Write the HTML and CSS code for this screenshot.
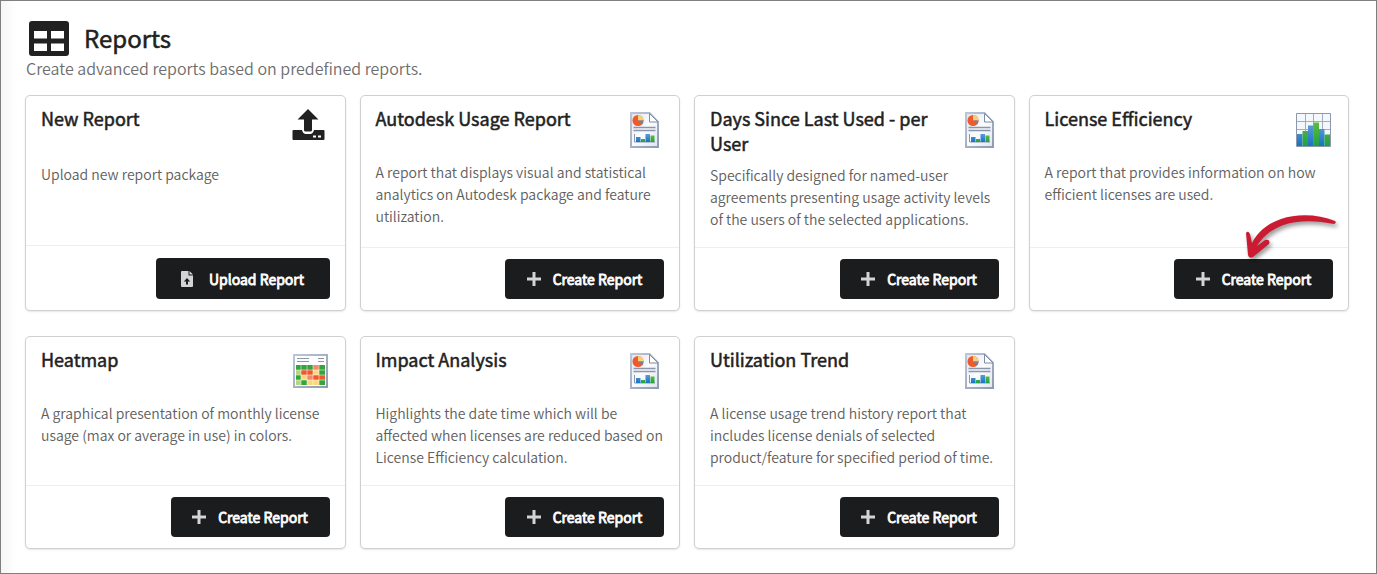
FILE: index.html
```html
<!DOCTYPE html>
<html lang="en">

<head>
    <meta charset="utf-8">
    <title>Reports</title>
    <link rel="stylesheet" href="styles.css">
</head>

<body>
    <!-- shared icons -->
    <svg class="sprite" aria-hidden="true">
        <defs>
            <linearGradient id="pageFill" x1="0" y1="0" x2="1" y2="1">
                <stop offset="0" stop-color="#dce4f0" />
                <stop offset="0.5" stop-color="#fbfcfe" />
                <stop offset="1" stop-color="#dfe5f0" />
            </linearGradient>
            <linearGradient id="frame" x1="0" y1="0" x2="1" y2="1">
                <stop offset="0" stop-color="#bcc6d6" />
                <stop offset="1" stop-color="#8f9bb1" />
            </linearGradient>
            <linearGradient id="blueBar" x1="0" y1="0" x2="0" y2="1">
                <stop offset="0" stop-color="#5a9bd8" />
                <stop offset="1" stop-color="#1873c2" />
            </linearGradient>
            <linearGradient id="greenBar" x1="0" y1="0" x2="0" y2="1">
                <stop offset="0" stop-color="#5cbc3c" />
                <stop offset="1" stop-color="#1fa048" />
            </linearGradient>
        </defs>
        <symbol id="plus" viewBox="0 0 14 14">
            <path d="M5.500 0h3v5.500H14v3H8.500V14h-3V8.500H0v-3h5.500z" />
        </symbol>
        <symbol id="report" viewBox="0 0 35 36">
            <path d="M4 1h18.500l8.500 9v25H4z" fill="url(#pageFill)" stroke="url(#frame)" stroke-width="2" />
            <path d="M22.500 1.500V10H31z" fill="#fff" stroke="#7f8ca3" />
            <circle cx="11" cy="8.500" r="5.500" fill="#f0592b" />
            <path d="M11 8.500V3a5.500 5.500 0 0 1 5.500 5.500z" fill="#f9cf73" />
            <path d="M11 8.500h5.500a5.500 5.500 0 0 1-1.500 4z" fill="#75829b" />
            <path d="M6.500 15.500h22M6.500 18.500h22" stroke="#8b95ab" stroke-width="1.300" />
            <path d="M7.500 22v8h20.500" fill="none" stroke="#8b95ab" />
            <path d="M9 25h4.500v5H9zM18.500 22H23v8h-4.500z" fill="url(#blueBar)" />
            <path d="M14 27h4v3h-4zM23.500 23.500h4V30h-4z" fill="url(#greenBar)" />
        </symbol>
    </svg>

    <div class="page">
        <header class="page-header">
            <h1>
                <svg class="page-icon" viewBox="0 0 40 35" aria-hidden="true">
                    <path fill-rule="evenodd" d="M3 0h34a3 3 0 0 1 3 3v29a3 3 0 0 1-3 3H3a3 3 0 0 1-3-3V3a3 3 0 0 1 3-3zM5 10v7.500h13V10zM22 10v7.500h13V10zM5 22.500V30h13v-7.500zM22 22.500V30h13v-7.500z" />
                </svg>
                Reports
            </h1>
            <p>Create advanced reports based on predefined reports.</p>
        </header>

        <main class="cards">
            <article class="card card-upload">
                <div class="card-head">
                    <h2>New Report</h2>
                    <svg class="card-icon" viewBox="0 0 35 36" aria-hidden="true">
                        <path d="M15 -3L25.500 7.500H19V18q0 1.500-1.500 1.500h-5Q11 19.500 11 18V7.500H4.500z" />
                        <path d="M0.500 18h8.500q1 4 4 4h4q3 0 4-4h9.500a1 1 0 0 1 1 1v8a1 1 0 0 1-1 1h-30a1 1 0 0 1-1-1v-8a1 1 0 0 1 1-1z" />
                        <path d="M20 23.500h3v2h-3zM25 23.500h3v2h-3z" fill="#fff" />
                    </svg>
                </div>
                <p>Upload new report package</p>
                <div class="card-foot">
                    <button type="button" class="upload">
                        <svg class="file-icon" viewBox="0 0 12 16" aria-hidden="true">
                            <path d="M1 0h6.500v4.500H12V15a1 1 0 0 1-1 1H1a1 1 0 0 1-1-1V1a1 1 0 0 1 1-1zM8.500 0L12 3.500H8.500z" />
                            <path d="M6 7l3.200 3.500H7V13.500H5v-3H2.800z" fill="#1b1c1d" />
                        </svg>
                        Upload Report
                    </button>
                </div>
            </article>

            <article class="card">
                <div class="card-head">
                    <h2>Autodesk Usage Report</h2>
                    <svg class="card-icon" aria-hidden="true"><use href="#report" /></svg>
                </div>
                <p>A report that displays visual and statistical analytics on Autodesk package and feature utilization.</p>
                <div class="card-foot">
                    <button type="button"><svg class="plus-icon" aria-hidden="true"><use href="#plus" /></svg>Create Report</button>
                </div>
            </article>

            <article class="card">
                <div class="card-head">
                    <h2>Days Since Last Used - per User</h2>
                    <svg class="card-icon" aria-hidden="true"><use href="#report" /></svg>
                </div>
                <p>Specifically designed for named-user agreements presenting usage activity levels of the users of the selected applications.</p>
                <div class="card-foot">
                    <button type="button"><svg class="plus-icon" aria-hidden="true"><use href="#plus" /></svg>Create Report</button>
                </div>
            </article>

            <article class="card">
                <div class="card-head">
                    <h2>License Efficiency</h2>
                    <svg class="card-icon" viewBox="0 0 35 36" aria-hidden="true">
                        <path d="M.500 1.500h34v33H.500z" fill="#f4f7fb" stroke="#8d98ad" />
                        <path d="M1 9.500h33M1 17.500h33M9.500 2v32M17.500 2v32M26.500 2v32" stroke="#a4adbf" />
                        <path d="M1 22h5.500v12H1zM12 13.500h5.500V34H12zM23 17h5.500v17H23z" fill="url(#blueBar)" />
                        <path d="M6.500 19H12v15H6.500zM17.500 10.500H23V34h-5.500zM28.500 22.500H34V34h-5.500z" fill="url(#greenBar)" />
                    </svg>
                </div>
                <p>A report that provides information on how efficient licenses are used.</p>
                <div class="card-foot">
                    <button type="button"><svg class="plus-icon" aria-hidden="true"><use href="#plus" /></svg>Create Report</button>
                    <svg class="pointer" viewBox="0 0 92 46" aria-hidden="true">
                        <path d="M90 7C62-4 22 0 7 29L5 20Q3 16 1 19L3 41Q4 45 8 43L24 30Q26 25 20 26L12 32C28 6 60 4 89 10Q92 9 90 7z" />
                    </svg>
                </div>
            </article>

            <article class="card">
                <div class="card-head">
                    <h2>Heatmap</h2>
                    <svg class="card-icon" viewBox="0 0 35 36" aria-hidden="true">
                        <path d="M1 2h33v32H1z" fill="#fff" stroke="url(#frame)" stroke-width="2" />
                        <path d="M4 5.500h12M4 8.500h12M25 5.500h6M25 8.500h6" stroke="#8b95ab" />
                        <path d="M3 12h29v5H3zM3 22h5v5H3zM8 27h6v5H8zM26 27h6v5h-6zM26 17h6v5h-6z" fill="#36a43c" />
                        <path d="M3 17h5v5H3zM3 27h5v5H3z" fill="#b3d77a" />
                        <path d="M8 17h12v5H8zM20 22h12v5H20z" fill="#f0592b" />
                        <path d="M20 12h6v5h-6zM14 22h6v5h-6z" fill="#f38a70" />
                        <path d="M20 17h6v5h-6zM8 22h6v5H8zM14 27h12v5H14z" fill="#f8d878" />
                        <path d="M8 12v20M14 12v20M20 12v20M26 12v20M3 17h29M3 22h29M3 27h29" stroke="#fff" stroke-opacity=".5" />
                    </svg>
                </div>
                <p>A graphical presentation of monthly license usage (max or average in use) in colors.</p>
                <div class="card-foot">
                    <button type="button"><svg class="plus-icon" aria-hidden="true"><use href="#plus" /></svg>Create Report</button>
                </div>
            </article>

            <article class="card">
                <div class="card-head">
                    <h2>Impact Analysis</h2>
                    <svg class="card-icon" aria-hidden="true"><use href="#report" /></svg>
                </div>
                <p>Highlights the date time which will be affected when licenses are reduced based on License Efficiency calculation.</p>
                <div class="card-foot">
                    <button type="button"><svg class="plus-icon" aria-hidden="true"><use href="#plus" /></svg>Create Report</button>
                </div>
            </article>

            <article class="card">
                <div class="card-head">
                    <h2>Utilization Trend</h2>
                    <svg class="card-icon" aria-hidden="true"><use href="#report" /></svg>
                </div>
                <p>A license usage trend history report that includes license denials of selected product/feature for specified period of time.</p>
                <div class="card-foot">
                    <button type="button"><svg class="plus-icon" aria-hidden="true"><use href="#plus" /></svg>Create Report</button>
                </div>
            </article>
        </main>
    </div>
</body>

</html>
```
FILE: styles.css
```css
* {
    box-sizing: border-box;
}

body {
    margin: 0;
    font-family: "Noto Sans CJK SC", "Open Sans", sans-serif;
    color: #212121;
}

h1,
h2,
p {
    margin: 0;
}

h1,
h2 {
    -webkit-text-stroke: 0.5px currentColor;
}

.sprite {
    position: absolute;
    width: 0;
    height: 0;
}

.page {
    min-height: 100vh;
    padding: 17px 27px 24px 24px;
    border: 1px solid #7f7f7f;
    background: linear-gradient(to right, #f6f6f6, #fff 16px);
}

.page-header {
    margin-bottom: 16px;
}

.page-header h1 {
    display: flex;
    align-items: center;
    gap: 15px;
    padding-left: 4px;
    font-size: 24px;
    font-weight: 400;
    line-height: 40px;
}

.page-header p {
    padding-left: 1px;
    font-size: 16px;
    font-weight: 350;
    line-height: 21px;
    color: #6e6e6e;
}

.page-icon {
    width: 40px;
    height: 35px;
    fill: #212121;
}

.cards {
    display: grid;
    grid-template-columns: repeat(4, 1fr);
    gap: 25px 14px;
}

.card {
    display: flex;
    flex-direction: column;
    border: 1px solid #d0d0d0;
    border-radius: 5px;
    background: #fff;
    box-shadow: 0 1px 2px rgba(0, 0, 0, 0.1);
}

.card-head {
    display: flex;
    justify-content: space-between;
    min-height: 65px;
    padding: 10px 17px 8px 15px;
}

.card h2 {
    max-width: 220px;
    font-size: 18px;
    font-weight: 400;
    line-height: 25px;
}

.card-icon {
    flex: none;
    width: 35px;
    height: 36px;
    margin-top: 6px;
    fill: #212121;
    overflow: visible;
}

.card p {
    padding: 0 15px 17px;
    font-size: 14px;
    font-weight: 350;
    line-height: 22px;
    color: #606060;
}

.card-upload p {
    padding-top: 2px;
}

.card-foot {
    position: relative;
    display: flex;
    justify-content: flex-end;
    margin-top: auto;
    padding: 11px 15px;
    border-top: 1px solid #eee;
}

.card-upload .card-foot {
    padding: 12px 15px 11px;
}

button {
    display: flex;
    align-items: center;
    justify-content: center;
    gap: 12px;
    width: 159px;
    height: 40px;
    padding: 0;
    border: none;
    border-radius: 4px;
    background: #1b1c1d;
    color: #fff;
    font-family: inherit;
    font-size: 14px;
    font-weight: 400;
    -webkit-text-stroke: 0.8px currentColor;
    cursor: pointer;
}

button svg {
    fill: #d2d5d4;
}

button.upload {
    gap: 16px;
    width: 174px;
    height: 41px;
}

.plus-icon {
    width: 14px;
    height: 14px;
}

.file-icon {
    width: 12px;
    height: 16px;
}

/* arrow drawn over the card, pointing at the button */
.pointer {
    position: absolute;
    right: 11px;
    bottom: 50px;
    width: 92px;
    height: 46px;
    fill: #cb1b33;
    filter: drop-shadow(2px 3px 2px rgba(0, 0, 0, 0.4));
}
```
